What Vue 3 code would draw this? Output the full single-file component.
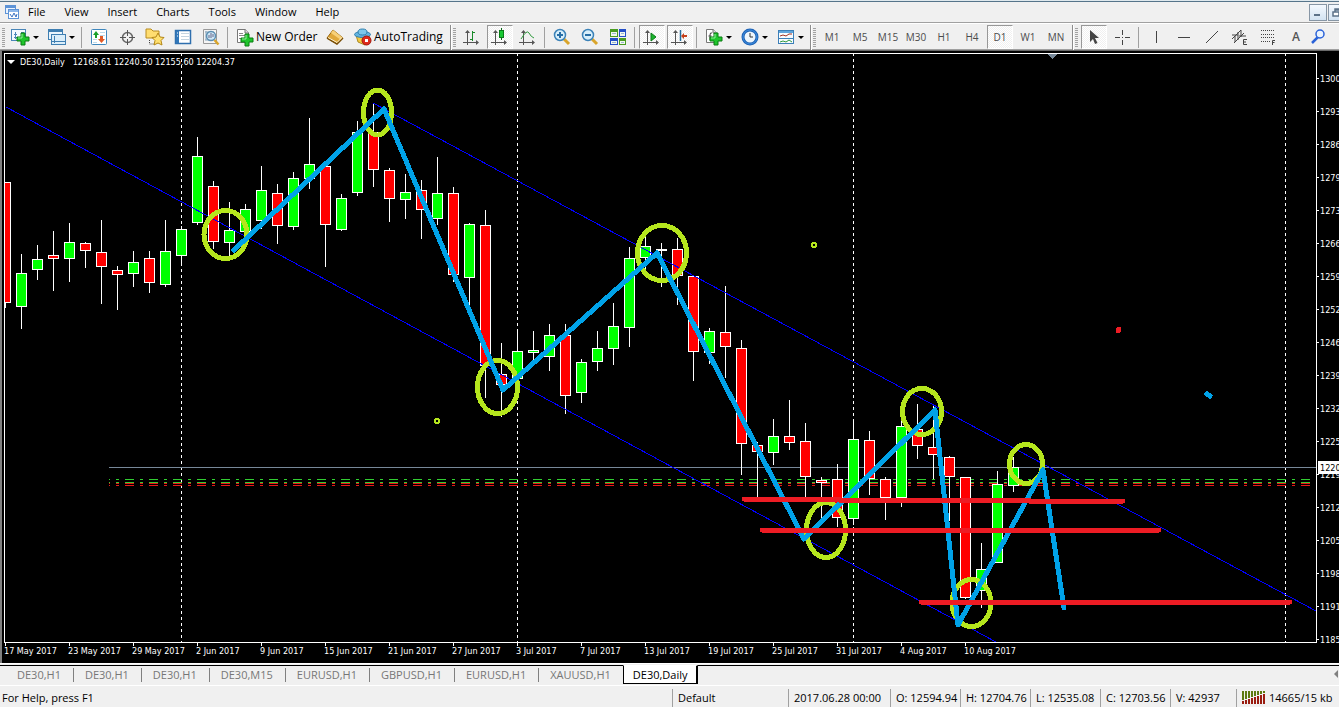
<script setup>
const menus = ['File', 'View', 'Insert', 'Charts', 'Tools', 'Window', 'Help']

const plus = (x, y) =>
  `<path d="M${x + 4} ${y}h4v4h4v4h-4v4h-4v-4h-4v-4h4z" fill="#1fc52c" stroke="#0a7d12"/><path d="M${x + 5} ${y + 1}v4h-4" fill="none" stroke="#8ff09a"/>`
const axes =
  '<path d="M5.500 4v14M1 15.500h15" stroke="#555" fill="none"/><path d="M3 6l2.500-3 2.500 3zM14 13l3 2.500-3 2.500z" fill="#555"/>'

const icons = {
  newChart:
    '<rect x="0.500" y="2.500" width="14" height="11" fill="#f4faff" stroke="#4a86b8"/><path d="M4.500 5v7M3 7.500h3M3 10.500h10M10 5.500h3" stroke="#4a86b8" fill="none"/>' + plus(6, 6),
  profiles:
    '<rect x="1.500" y="2.500" width="14" height="10" fill="#eaf5fd" stroke="#3f7fb2"/><path d="M2 4h13" stroke="#3f7fb2" stroke-width="2"/><rect x="4.500" y="7.500" width="14" height="10" fill="#dbeefa" stroke="#3f7fb2"/><path d="M5 14.500h13M7.500 9v7" stroke="#3f7fb2"/>',
  market:
    '<rect x="2.500" y="2.500" width="15" height="15" rx="1" fill="#fff" stroke="#3f87bd"/><path d="M11 5.500h5M11 8.500h5M4 12.500h4M4 15.500h4" stroke="#bcd9ea"/><path d="M4 8l3-4 3 4H8v3H6V8z" fill="#19a02a"/><path d="M9 12l3.500 4 3.500-4h-2V9h-3v3z" fill="#e25a26"/>',
  cross:
    '<circle cx="10.500" cy="10.500" r="5" fill="none" stroke="#666" stroke-width="1.500"/><path d="M10.500 3v6M10.500 12v6M3 10.500h6M12 10.500h6" stroke="#555"/>',
  navigator:
    '<path d="M1 2h5l2 2h6v7H1z" fill="#ffdd70" stroke="#b88c20"/><path d="M4.500 13v4h5" stroke="#444" fill="none" stroke-dasharray="1 1"/><path d="M13 6l2 4 4 .5-3 3 1 4.500-4-2-4 2 1-4.500-3-3 4-.5z" fill="#ffe070" stroke="#b48716"/>',
  terminal:
    '<rect x="2.500" y="3.500" width="15" height="13" fill="#fff" stroke="#2f6fae" stroke-width="1.500"/><rect x="3" y="4" width="3" height="12" fill="#3177b9"/><path d="M8 6.500h8M8 9.500h8M8 12.500h8" stroke="#c4d4e0"/><path d="M4 6h1M4 9h1" stroke="#fff"/>',
  tester:
    '<path d="M2.500 2.500h13v14h-13z" fill="#f5f5f5" stroke="#999"/><path d="M4 5h9M4 13h4M5 4v9" stroke="#8aa8bd"/><circle cx="10" cy="9" r="4.500" fill="#cfe8f7" stroke="#5c8fb3" stroke-width="1.500"/><path d="M10 6v5M8 8v3M12 7v3" stroke="#668"/><path d="M13.500 13l4 4.500" stroke="#d9a52c" stroke-width="2.500"/>',
  order:
    '<path d="M2.500 2.500h8l3 3v10h-11z" fill="#fff" stroke="#777"/><path d="M10 2v4h4" fill="#ddd" stroke="#777"/><path d="M4 6.500h4M4 8.500h7M4 11.500h4" stroke="#888"/>' + plus(6, 7),
  book:
    '<path d="M8 3l10 8-6 6-10-6z" fill="#e0a83a" stroke="#99660e"/><path d="M8 3l10 8-2 2L6 6z" fill="#f7d078"/><path d="M2 11l10 6 6-6" fill="none" stroke="#7a4f08" stroke-width="1.500"/><path d="M3 10.500l9 5 5-5" fill="none" stroke="#fff3cf"/>',
  auto:
    '<path d="M3 8h13l1 5-5 5-7-3z" fill="#f4c940" stroke="#a98a28"/><ellipse cx="9.500" cy="7.500" rx="8" ry="3" fill="#62b3e0" stroke="#2e7fae"/><ellipse cx="9.500" cy="5" rx="4.500" ry="3" fill="#7cc6ea" stroke="#2e7fae"/><circle cx="13.500" cy="13.500" r="4.500" fill="#dd2a1b" stroke="#a3170d"/><rect x="12" y="12" width="3" height="3" fill="#fff"/>',
  bars: axes + '<path d="M10.500 4v10M8 12.500h2M11 5.500h2" stroke="#1a8a2a" fill="none"/>',
  candles: axes + '<path d="M11.500 1v12" stroke="#0a6d16"/><rect x="9.500" y="3.500" width="4" height="7" fill="#18c832" stroke="#0a7d18"/>',
  line: axes + '<path d="M3 12q6-10 8-6t5 5" stroke="#2f9a3c" fill="none"/>',
  zoomIn:
    '<path d="M12 12l5 5" stroke="#d9a52c" stroke-width="3"/><circle cx="8" cy="8" r="5.500" fill="#d8effb" stroke="#3b82b8" stroke-width="1.500"/><path d="M5 8h6M8 5v6" stroke="#276ea6" stroke-width="2"/>',
  zoomOut:
    '<path d="M12 12l5 5" stroke="#d9a52c" stroke-width="3"/><circle cx="8" cy="8" r="5.500" fill="#d8effb" stroke="#3b82b8" stroke-width="1.500"/><path d="M5 8h6" stroke="#276ea6" stroke-width="2"/>',
  tile:
    '<rect x="2" y="2" width="8" height="8" fill="#4a9c22"/><rect x="11" y="2" width="7" height="8" fill="#2450c8"/><rect x="2" y="11" width="8" height="7" fill="#2450c8"/><rect x="11" y="11" width="7" height="7" fill="#4a9c22"/><path d="M3 5h6v4H3zM12 5h5v4h-5zM3 14h6v3H3zM12 14h5v3h-5z" fill="#f2f8ee"/><path d="M4 6.500h4M13 6.500h3M4 15.500h4M13 15.500h3" stroke="#9bb8d0"/>',
  scroll: axes + '<path d="M9 6l5 4-5 4z" fill="#19b52c" stroke="#0b7a18"/>',
  shift: axes + '<path d="M10.500 3v11" stroke="#246c9c" stroke-width="1.500"/><path d="M11 9l3-3v2h3v2h-3v2z" fill="#c5401a"/>',
  indicator:
    '<path d="M2.500 2.500h7l3 3v10h-10z" fill="#fff" stroke="#777"/><path d="M9 2v4h4" fill="#ddd" stroke="#777"/><path d="M8 6q-2-1-2 2v5M4.500 9h3" stroke="#444" fill="none"/>' + plus(6, 6),
  clock:
    '<circle cx="10" cy="10" r="7" fill="#eef6fc" stroke="#1d62b5" stroke-width="3"/><circle cx="10" cy="10" r="7" fill="none" stroke="#3f8fe0"/><path d="M10 6v4h3" stroke="#333" fill="none"/>',
  template:
    '<rect x="2.500" y="3.500" width="15" height="13" fill="#f7fbff" stroke="#3c7fb8"/><path d="M3 5h14" stroke="#5ea5dc" stroke-width="2"/><path d="M3 11.500h14" stroke="#3c7fb8"/><path d="M4 9l3-1 3 1 3-2h3" stroke="#a03020" fill="none"/><path d="M4 15l3-1 3 1 3-2 3 2" stroke="#2f9a3c" fill="none"/>',
  cursor: '<path d="M6 3v12l3-3 2 5 2.500-1-2.500-5h4z" fill="#444"/>',
  crosshair: '<path d="M10.500 3v5M10.500 13v5M3 10.500h5M13 10.500h5M10 10.500h1" stroke="#444"/>',
  vline: '<path d="M10.500 4v12" stroke="#444"/>',
  hline: '<path d="M4 10.500h12" stroke="#444"/>',
  trend: '<path d="M4 16l12-12" stroke="#444"/>',
  channel:
    '<path d="M2 12l9-9M4 16l10-10M2 8h6M5 15V9M8 13V5M11 10V3M9 9h7" stroke="#444" fill="none"/><path d="M17 12.500h-3.500v5H17M13.500 15H16" stroke="#444" fill="none"/>',
  fibo:
    '<path d="M3 3.500h14M3 7.500h14M3 10.500h14M3 14.500h9" stroke="#444" stroke-dasharray="1 1"/><path d="M17 13.500h-2.500V18M14 15.500h2.500" stroke="#444" fill="none"/>',
  text: '<text x="10" y="14" text-anchor="middle" font-size="12" font-weight="600" font-family="Open Sans, sans-serif" fill="#555">A</text>',
  search:
    '<path d="M9 10l-6 6" stroke="#2a62d8" stroke-width="2.500"/><circle cx="11" cy="7" r="4" fill="#eaf4ff" stroke="#2a62d8" stroke-width="1.500"/>',
}

const b = (icon, label, o = {}) => ({ kind: 'btn', icon, label, ...o })
const sep = { kind: 'sep' }
const end = { kind: 'end' }
const tf = (text, on) => ({ kind: 'btn', text, label: text, on })
const tools = [
  b('newChart', 'New chart', { drop: true }), b('profiles', 'Profiles', { drop: true }), sep,
  b('market', 'Market Watch'), b('cross', 'Data Window'), b('navigator', 'Navigator'), b('terminal', 'Terminal'), b('tester', 'Strategy Tester'), sep,
  b('order', 'New Order', { caption: 'New Order', cls: 'order' }), b('book', 'MetaEditor'), b('auto', 'AutoTrading', { caption: 'AutoTrading', cls: 'auto' }), end,
  b('bars', 'Bar chart'), b('candles', 'Candlesticks', { on: true }), b('line', 'Line chart'), sep,
  b('zoomIn', 'Zoom in'), b('zoomOut', 'Zoom out'), b('tile', 'Tile windows'), sep,
  b('scroll', 'Auto scroll', { on: true }), b('shift', 'Chart shift', { on: true }), sep,
  b('indicator', 'Indicators', { drop: true }), b('clock', 'Periods', { drop: true }), b('template', 'Templates', { drop: true }), end,
  tf('M1'), tf('M5'), tf('M15'), tf('M30'), tf('H1'), tf('H4'), tf('D1', true), tf('W1'), tf('MN'), end,
  b('cursor', 'Cursor', { on: true }), b('crosshair', 'Crosshair'), sep,
  b('vline', 'Vertical line'), b('hline', 'Horizontal line'), b('trend', 'Trendline'), b('channel', 'Equidistant channel'), b('fibo', 'Fibonacci retracement'), b('text', 'Text'), b('search', 'Search', { cls: 'narrow' }),
]

// Each candle: direction, high, body top, body bottom, low (canvas y)
const raw = [
  ['r', 182, 182, 303, 308], ['g', 254, 273, 307, 329], ['g', 245, 259, 270, 280], ['r', 231, 255, 259, 291],
  ['g', 223, 242, 259, 282], ['r', 242, 243, 251, 268], ['r', 220, 252, 267, 304], ['r', 266, 270, 275, 310],
  ['g', 251, 262, 274, 287], ['r', 251, 258, 283, 293], ['g', 220, 251, 285, 287], ['g', 226, 229, 256, 266],
  ['g', 137, 156, 223, 225], ['r', 181, 186, 242, 249], ['g', 202, 230, 243, 257], ['g', 204, 209, 232, 235],
  ['g', 166, 190, 221, 229], ['r', 184, 193, 226, 244], ['g', 172, 178, 227, 230], ['g', 118, 164, 179, 189],
  ['r', 166, 166, 225, 267], ['g', 194, 198, 230, 231], ['g', 121, 132, 193, 196], ['r', 103, 132, 170, 187],
  ['r', 168, 170, 199, 222], ['g', 174, 192, 200, 219], ['r', 180, 190, 210, 239], ['g', 157, 193, 219, 225],
  ['r', 187, 193, 275, 282], ['g', 223, 224, 278, 305], ['r', 210, 225, 366, 398], ['r', 343, 374, 385, 417],
  ['g', 329, 351, 379, 379], ['g', 331, 350, 353, 360], ['g', 324, 335, 357, 371], ['r', 324, 335, 396, 414],
  ['g', 359, 362, 393, 403], ['g', 331, 348, 362, 371], ['g', 303, 326, 349, 365], ['g', 247, 258, 328, 347],
  ['g', 236, 246, 258, 270], ['w', 243, 249, 251, 287], ['r', 238, 249, 276, 305], ['r', 276, 276, 352, 381],
  ['g', 328, 331, 353, 364], ['r', 286, 332, 347, 378], ['r', 340, 348, 444, 475], ['r', 442, 445, 452, 498],
  ['g', 419, 436, 453, 465], ['r', 400, 436, 443, 450], ['r', 423, 441, 477, 497], ['r', 477, 480, 483, 520],
  ['r', 464, 479, 518, 527], ['g', 419, 439, 519, 525], ['r', 431, 440, 479, 495], ['r', 477, 479, 498, 520],
  ['g', 415, 426, 498, 507], ['r', 404, 429, 446, 459], ['r', 406, 447, 455, 479], ['r', 456, 457, 477, 521],
  ['r', 477, 477, 598, 599], ['g', 543, 569, 591, 608], ['g', 471, 484, 563, 563], ['g', 457, 467, 486, 492],
]
const fills = { r: '#ff0000', g: '#00ff00', w: '#ffffff' }
const candles = raw.map(([k, hi, top, bot, lo], i) => ({ x: 5 + 16 * i, hi, top, bot, lo, fill: fills[k] }))

const rings = [
  [225.5, 234.5, 21.5, 24], [377.5, 112.5, 14, 22.5], [497.5, 387, 20, 26.5], [662, 253, 24.5, 27.5],
  [826, 530, 19.5, 27.5], [922, 411.5, 19.5, 23], [1026, 464, 16.5, 19.5], [971.5, 603, 19.5, 23.5],
]
const periods = [181, 517, 853, 1285]
const orders = [[479, '#32cd32'], [482, '#32cd32'], [483, '#e81818'], [485, '#e81818']]

const dates = ['17 May 2017', '23 May 2017', '29 May 2017', '2 Jun 2017', '9 Jun 2017', '15 Jun 2017', '21 Jun 2017', '27 Jun 2017', '3 Jul 2017', '7 Jul 2017', '13 Jul 2017', '19 Jul 2017', '25 Jul 2017', '31 Jul 2017', '4 Aug 2017', '10 Aug 2017']
const prices = ['1300', '1293', '1286', '1279', '1273', '1266', '1259', '1252', '1246', '1239', '1232', '1225', '1219', '1212', '1205', '1198', '1191', '1185']
const tabs = ['DE30,H1', 'DE30,H1', 'DE30,H1', 'DE30,M15', 'EURUSD,H1', 'GBPUSD,H1', 'EURUSD,H1', 'XAUUSD,H1', 'DE30,Daily']
</script>

<template>
  <div class="app">
    <div class="edge"></div>
    <header class="menubar">
      <svg class="logo" width="16" height="16" viewBox="0 0 16 16" aria-hidden="true">
        <rect x="1.500" y="1.500" width="10" height="8" fill="#eaf3ff" stroke="#5d93d6" />
        <path d="M2 3h9" stroke="#5d93d6" stroke-width="2" />
        <rect x="4.500" y="5.500" width="10" height="9" fill="#fff" stroke="#5d93d6" />
        <path d="M5 7h9" stroke="#8db7ea" stroke-width="2" />
        <path d="M6 10l2 3 2-4 2 4 1-3" fill="none" stroke="#3a72c2" />
      </svg>
      <nav class="menus">
        <button v-for="m in menus" :key="m" type="button">{{ m }}</button>
      </nav>
      <div class="winbtns">
        <button type="button" aria-label="Minimize">
          <svg width="16" height="15" viewBox="0 0 16 15"><rect x="4" y="9" width="6" height="2" fill="#5c7288" /></svg>
        </button>
        <button type="button" aria-label="Restore">
          <svg width="16" height="15" viewBox="0 0 16 15">
            <path d="M6 7V4h7v5h-3M6 5h7" fill="none" stroke="#5c7288" stroke-width="1.500" />
            <rect x="4" y="7" width="6" height="4" fill="#fff" stroke="#5c7288" stroke-width="1.500" />
          </svg>
        </button>
      </div>
    </header>

    <div class="toolbar" role="toolbar" aria-label="Main">
      <i class="grip first"></i>
      <template v-for="(t, i) in tools" :key="i">
        <i v-if="t.kind === 'sep'" class="sep"></i>
        <span v-else-if="t.kind === 'end'" class="end"><i class="grip"></i></span>
        <button v-else type="button" :aria-label="t.label" :class="['tool', t.cls, { on: t.on, drop: t.drop }]">
          <svg v-if="t.icon" width="20" height="20" viewBox="0 0 20 20" aria-hidden="true"><g v-html="icons[t.icon]"></g></svg>
          <span v-if="t.text">{{ t.text }}</span>
          <span v-if="t.caption" class="caption">{{ t.caption }}</span>
          <i v-if="t.drop" class="arrow"></i>
        </button>
      </template>
    </div>

    <main class="workspace">
      <section class="plot" aria-label="DE30 Daily chart">
        <svg class="canvas" shape-rendering="crispEdges">
          <g transform="translate(-5 -54)">
            <path d="M1048 54h9l-4 5h-1z" fill="#778899" />
            <line v-for="p in periods" :key="p" :x1="p + 0.5" :x2="p + 0.5" y1="53" y2="642" stroke="#fff" stroke-dasharray="3 3" />
            <rect x="109" y="467" width="4000" height="1" fill="#778899" />
            <line v-for="o in orders" :key="o[0]" x1="109" x2="1310" :y1="o[0] + 0.5" :y2="o[0] + 0.5" :stroke="o[1]" stroke-dasharray="9 6 3 6" stroke-dashoffset="8" />
            <g v-for="c in candles" :key="c.x">
              <rect :x="c.x" :y="c.hi" width="1" :height="c.lo - c.hi" fill="#fff" />
              <rect :x="c.x - 5" :y="c.top" width="11" :height="c.bot - c.top" fill="#fff" />
              <rect :x="c.x - 4" :y="c.top + 1" width="9" :height="Math.max(c.bot - c.top - 2, 0)" :fill="c.fill" />
            </g>
            <path d="M6 107L996 642M373 103L1316 611" stroke="#0000ff" fill="none" />
            <g fill="none" stroke="#b5e61d" stroke-width="5">
              <ellipse v-for="(r, i) in rings" :key="i" :cx="r[0]" :cy="r[1]" :rx="r[2]" :ry="r[3]" />
            </g>
            <g fill="none" stroke="#b5e61d" stroke-width="2">
              <circle cx="437" cy="421" r="2" />
              <circle cx="814" cy="245" r="2" />
            </g>
            <path d="M234 250L384 109L503 390L657 253L804 539L935 410L958 625L1043 470L1064 608" fill="none" stroke="#00a2e8" stroke-width="5" stroke-linecap="round" stroke-linejoin="round" />
            <path d="M744 499H838L840 500H1028L1030 501H1123M762 530H1159M921 602H1290" fill="none" stroke="#ed1c24" stroke-width="5" stroke-linecap="round" />
            <rect x="1116" y="327" width="5" height="6" rx="2" fill="#ed1c24" />
            <path d="M1207 394l3 2" stroke="#00a2e8" stroke-width="5" stroke-linecap="round" />
          </g>
        </svg>
        <p class="title"><i></i><span>DE30,Daily</span><span class="quote">12168.61 12240.50 12155.60 12204.37</span></p>
      </section>
      <ol class="prices">
        <li v-for="p in prices" :key="p">{{ p }}</li>
        <li class="current">1220</li>
      </ol>
      <ol class="dates">
        <li v-for="d in dates" :key="d">{{ d }}</li>
      </ol>
    </main>

    <nav class="tabs">
      <button v-for="(t, i) in tabs" :key="i" type="button" :class="{ active: i === 8 }">{{ t }}</button>
      <i class="more"></i>
    </nav>

    <footer class="status">
      <span class="help">For Help, press F1</span>
      <span class="profile">Default</span>
      <span class="time">2017.06.28 00:00</span>
      <span class="price">O: 12594.94</span>
      <span class="price">H: 12704.76</span>
      <span class="price">L: 12535.08</span>
      <span class="price">C: 12703.56</span>
      <span class="volume">V: 42937</span>
      <span class="net">
        <svg width="24" height="14" viewBox="0 0 24 14" shape-rendering="crispEdges" aria-hidden="true">
          <g v-for="n in 8" :key="n">
            <rect :x="n * 3 - 3" y="0" width="2" :height="10 - n" fill="#5c7a10" />
            <rect :x="n * 3 - 3" :y="11 - n" width="2" :height="n + 2" fill="#9a1c10" />
          </g>
        </svg>
        14665/15 kb
      </span>
    </footer>
  </div>
</template>

<style>
body {
  background: #f0f0f0;
}
</style>

<style scoped>
.app {
  display: flex;
  flex-direction: column;
  min-height: 100vh;
  overflow: hidden;
  background: #f0f0f0;
  color: #000;
  font: 11px/16px "Open Sans", "Noto Sans", sans-serif;
}
.app * {
  box-sizing: border-box;
}
button {
  margin: 0;
  padding: 0;
  border: 0;
  background: none;
  color: inherit;
  font: inherit;
  white-space: nowrap;
}
ol,
p {
  margin: 0;
  padding: 0;
  list-style: none;
}
.edge {
  height: 2px;
  background: #dfe9ee;
  border-bottom: 1px solid #56748a;
}
.menubar {
  display: flex;
  height: 21px;
  align-items: center;
  padding-left: 4px;
  border-bottom: 1px solid #a0a0a0;
}
.logo {
  flex: none;
}
.menus {
  display: flex;
  gap: 19px;
  margin-left: 8px;
}
.winbtns {
  display: flex;
  gap: 1px;
  width: 30px;
  margin-left: auto;
  overflow: hidden;
}
.winbtns button {
  flex: none;
  width: 18px;
  height: 17px;
  border: 1px solid #8796a5;
  background: linear-gradient(#f4f9fe, #d3e3f2);
}
.winbtns svg {
  display: block;
}
.toolbar {
  display: flex;
  height: 27px;
  align-items: center;
  padding-top: 1px;
  border-top: 1px solid #fff;
  border-bottom: 1px solid #a0a0a0;
  color: #4c4c4c;
}
.grip {
  width: 3px;
  height: 19px;
  background: repeating-linear-gradient(#a2a2a2 0 1px, #f0f0f0 1px 2px);
}
.grip.first {
  flex: none;
  margin: 0 2px;
}
.sep {
  flex: none;
  width: 6px;
  height: 21px;
  background: linear-gradient(#a0a0a0, #a0a0a0) 2px 0 / 1px 100% no-repeat;
}
.end {
  display: flex;
  flex: none;
  width: 10px;
  height: 25px;
  align-items: center;
  padding-left: 5px;
  background: linear-gradient(90deg, #8c8c8c 1px, #fff 1px) 2px 0 / 2px 100% no-repeat;
}
.tool {
  display: flex;
  flex: none;
  width: 28px;
  height: 24px;
  align-items: center;
  justify-content: center;
  font-size: 10px;
}
.tool svg {
  flex: none;
}
.tool.on {
  width: 26px;
  margin: 0 1px;
  border: 1px solid #fff;
  border-top-color: #989898;
  border-left-color: #989898;
  background: repeating-conic-gradient(#fff 0 25%, #f0f0f0 0 50%) 0 0 / 2px 2px;
}
.tool.drop {
  width: 36px;
  justify-content: flex-start;
  padding-left: 4px;
}
.arrow {
  margin-left: 2px;
  border: 3px solid transparent;
  border-top-color: #000;
  border-bottom: 0;
}
.tool.order,
.tool.auto {
  justify-content: flex-start;
  padding-left: 4px;
  color: #000;
  font-size: 12px;
}
.tool.order {
  width: 90px;
}
.tool.auto {
  width: 99px;
}
.caption {
  margin-left: 1px;
}
.tool.narrow {
  width: 18px;
}
.workspace {
  display: grid;
  flex: 1;
  grid-template-columns: minmax(0, 1fr) 22px;
  grid-template-rows: 1fr 20px;
  padding: 2px 0 0 2px;
  border-top: 1px solid #696969;
  border-left: 2px solid #808080;
  background: #000;
  color: #fff;
  font: 9px/16px "DejaVu Sans Condensed", "DejaVu Sans", sans-serif;
}
.plot {
  position: relative;
  min-height: 590px;
  border: 1px solid #fff;
}
.canvas {
  position: absolute;
  inset: 0;
  width: 100%;
  height: 100%;
}
.title {
  position: absolute;
  top: 0;
  left: 2px;
  display: flex;
  align-items: center;
  gap: 5px;
  white-space: nowrap;
}
.title i {
  border: 4px solid transparent;
  border-top-color: #fff;
  border-bottom: 0;
}
.quote {
  margin-left: 3px;
}
.prices {
  position: relative;
  contain: size;
  overflow: hidden;
  padding-top: 9px;
}
.prices li {
  display: flex;
  height: 33px;
  align-items: center;
  gap: 1px;
}
.prices li::before {
  flex: none;
  width: 2px;
  height: 1px;
  background: #fff;
  content: "";
}
.prices .current {
  position: absolute;
  top: 408px;
  left: 1px;
  width: 21px;
  height: 13px;
  padding-left: 2px;
  background: #fff;
  color: #000;
}
.prices .current::before {
  display: none;
}
.dates {
  display: flex;
  grid-column: 1 / -1;
  overflow: hidden;
}
.dates li {
  position: relative;
  flex: none;
  width: 64px;
  white-space: nowrap;
}
.dates li::before {
  position: absolute;
  top: 0;
  left: 1px;
  width: 1px;
  height: 3px;
  background: #fff;
  content: "";
}
.tabs {
  display: flex;
  height: 23px;
  align-items: flex-start;
  padding-left: 6px;
  border-top: 1px solid #fff;
  border-bottom: 1px solid #fff;
  background: linear-gradient(#000, #000) 0 1px / 100% 1px no-repeat;
  color: #777;
}
.tabs button {
  height: 14px;
  margin-top: 4px;
  padding: 0 12px 0 11px;
  border-right: 1px solid #808080;
  line-height: 14px;
}
.tabs button:nth-last-of-type(2) {
  border-right: 0;
}
.tabs .active {
  height: 19px;
  margin-top: 1px;
  padding: 0 9px;
  border: 1px solid #000;
  border-top-color: #fff;
  border-right-width: 2px;
  background: #fff;
  color: #000;
  line-height: 18px;
}
.more {
  margin: 6px 1px 0 auto;
  border: 4px solid transparent;
  border-right-color: #808080;
  border-left: 0;
}
.status {
  display: flex;
  height: 21px;
  align-items: flex-end;
  line-height: 18px;
}
.status span {
  flex: none;
  height: 18px;
  padding-left: 5px;
  border-left: 1px solid #a0a0a0;
  white-space: nowrap;
}
.status .help {
  flex: 1;
  padding-left: 2px;
  border: 0;
}
.status .profile {
  width: 116px;
}
.status .time {
  width: 102px;
}
.status .price {
  width: 70px;
}
.status .volume {
  width: 66px;
}
.status .net {
  display: flex;
  width: 103px;
  align-items: center;
  gap: 3px;
}
</style>
